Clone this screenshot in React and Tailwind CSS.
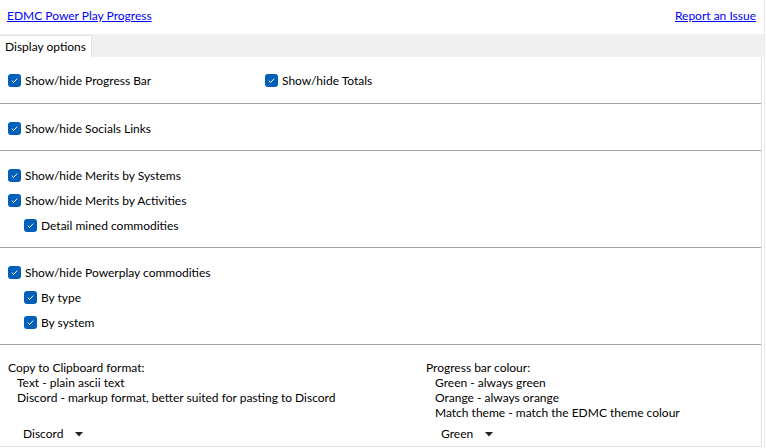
import React from 'react';

function Check({ label, indent }) {
  return (
    <div className={`flex items-center h-[25px] ${indent ? 'pl-[24px]' : 'pl-[8px]'}`}>
      <span className="w-[13px] h-[13px] rounded-[3px] bg-[#005fb8] flex items-center justify-center">
        <svg width="9" height="9" viewBox="0 0 9 9">
          <path d="M1.8 4.6 L3.7 6.4 L7.2 2.6" fill="none" stroke="#ffffff" strokeWidth="1" />
        </svg>
      </span>
      <span className="ml-[4px] text-[#000000]">{label}</span>
    </div>
  );
}

function Sep() {
  return <div className="h-px shrink-0 bg-[#a0a0a0]" />;
}

function Dropdown({ value, className }) {
  return (
    <div className={`flex items-center h-[20px] ${className}`}>
      <span>{value}</span>
      <svg width="8" height="5" viewBox="0 0 8 5" className="ml-[12px]">
        <path d="M0 0 L8 0 L4 4.5 Z" fill="#222222" />
      </svg>
    </div>
  );
}

export default function App() {
  return (
    <div className="w-[766px] h-[448px] bg-white text-[12px] text-black overflow-hidden" style={{ fontFamily: 'Lato, "Noto Sans", sans-serif' }}>
      <div className="w-[765px] h-[448px] border-r border-[#e8e8e8] flex flex-col">
        {/* top links */}
        <div className="h-[34px] shrink-0 flex items-start justify-between pt-[7px] pl-[7px] pr-[8px]">
          <a className="text-[#0000ff] underline" href="#">EDMC Power Play Progress</a>
          <a className="text-[#0000ff] underline" href="#">Report an Issue</a>
        </div>

        {/* tab bar */}
        <div className="h-[23px] shrink-0 bg-[#f0f0f0] flex items-end">
          <div className="h-[22px] px-[5px] bg-white border-t border-r border-[#e2e2e2] flex items-center">
            Display options
          </div>
        </div>

        {/* panel */}
        <div className="h-[390px] shrink-0 w-[762px] border-r border-b border-[#e0e0e0] flex flex-col">
          <div className="pt-[11px] pb-[10px] flex">
            <div className="w-[257px]">
              <Check label="Show/hide Progress Bar" />
            </div>
            <Check label="Show/hide Totals" />
          </div>
          <Sep />
          <div className="pt-[12px] pb-[9px]">
            <Check label="Show/hide Socials Links" />
          </div>
          <Sep />
          <div className="pt-[12px] pb-[9px]">
            <Check label="Show/hide Merits by Systems" />
            <Check label="Show/hide Merits by Activities" />
            <Check label="Detail mined commodities" indent />
          </div>
          <Sep />
          <div className="pt-[12px] pb-[9px]">
            <Check label="Show/hide Powerplay commodities" />
            <Check label="By type" indent />
            <Check label="By system" indent />
          </div>
          <Sep />
          <div className="flex pt-[15px]">
            <div className="w-[426px] pl-[8px] flex flex-col">
              <div className="leading-[15px]">Copy to Clipboard format:</div>
              <div className="pl-[9px] leading-[15px]">Text - plain ascii text</div>
              <div className="pl-[9px] leading-[15px]">Discord - markup format, better suited for pasting to Discord</div>
              <Dropdown value="Discord" className="pl-[15px] mt-[19px]" />
            </div>
            <div className="flex flex-col">
              <div className="leading-[15px]">Progress bar colour:</div>
              <div className="pl-[9px] leading-[15px]">Green - always green</div>
              <div className="pl-[9px] leading-[15px]">Orange - always orange</div>
              <div className="pl-[9px] leading-[15px]">Match theme - match the EDMC theme colour</div>
              <Dropdown value="Green" className="pl-[15px] mt-[4px]" />
            </div>
          </div>
        </div>
      </div>
    </div>
  );
}
